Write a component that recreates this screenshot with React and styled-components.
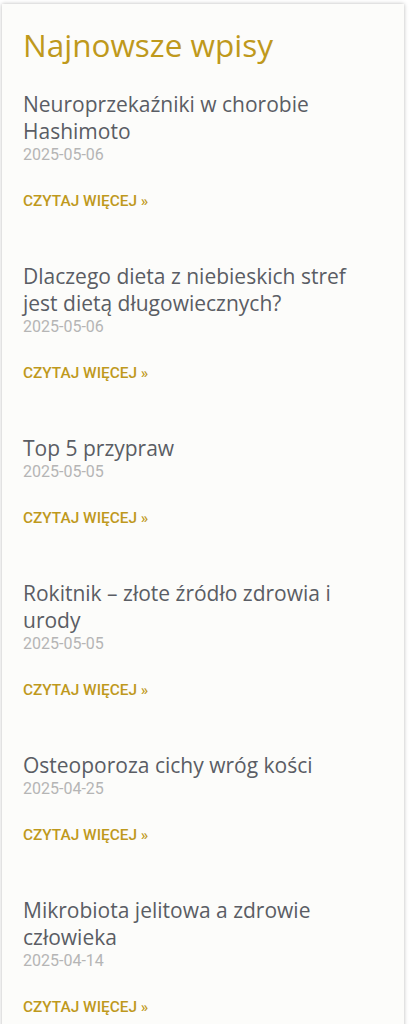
import React from "react";
import styled, { createGlobalStyle } from "styled-components";

const Global = createGlobalStyle`
  html, body { margin: 0; padding: 0; background: #ffffff; }
  body { font-family: "Open Sans", sans-serif; }
`;

const Page = styled.div`
  padding: 4px 7px 0 2px;
`;

const Card = styled.section`
  background: #fcfcfa;
  box-shadow: 0 0 4px rgba(0, 0, 0, 0.28);
  padding: 22px 21px 40px 21px;
`;

const Heading = styled.h2`
  margin: 0 0 27px 0;
  font-family: "Open Sans", sans-serif;
  font-weight: 400;
  font-size: 31.5px;
  line-height: 38px;
  color: #bf991c;
`;

const List = styled.ul`
  list-style: none;
  margin: 0;
  padding: 0;
  display: flex;
  flex-direction: column;
  gap: 52.5px;
`;

const Item = styled.li`
  display: flex;
  flex-direction: column;
  align-items: flex-start;
`;

const PostTitle = styled.a`
  font-family: "Open Sans", sans-serif;
  font-size: 21px;
  line-height: 27px;
  color: #5a5d64;
  text-decoration: none;
`;

const PostDate = styled.span`
  font-family: Roboto, sans-serif;
  font-size: 16px;
  line-height: 20px;
  color: #b5b5b5;
  margin-bottom: 25.5px;
`;

const ReadMore = styled.a`
  font-family: Roboto, sans-serif;
  font-weight: 500;
  font-size: 15.4px;
  line-height: 20px;
  color: #bf991c;
  text-transform: uppercase;
  text-decoration: none;
`;

const posts = [
  { title: "Neuroprzekaźniki w chorobie Hashimoto", date: "2025-05-06" },
  { title: "Dlaczego dieta z niebieskich stref jest dietą długowiecznych?", date: "2025-05-06" },
  { title: "Top 5 przypraw", date: "2025-05-05" },
  { title: "Rokitnik – złote źródło zdrowia i urody", date: "2025-05-05" },
  { title: "Osteoporoza cichy wróg kości", date: "2025-04-25" },
  { title: "Mikrobiota jelitowa a zdrowie człowieka", date: "2025-04-14" },
];

export default function App() {
  return (
    <>
      <Global />
      <Page>
        <Card>
          <Heading>Najnowsze wpisy</Heading>
          <List>
            {posts.map((p) => (
              <Item key={p.title}>
                <PostTitle href="#">{p.title}</PostTitle>
                <PostDate>{p.date}</PostDate>
                <ReadMore href="#">Czytaj więcej »</ReadMore>
              </Item>
            ))}
          </List>
        </Card>
      </Page>
    </>
  );
}
